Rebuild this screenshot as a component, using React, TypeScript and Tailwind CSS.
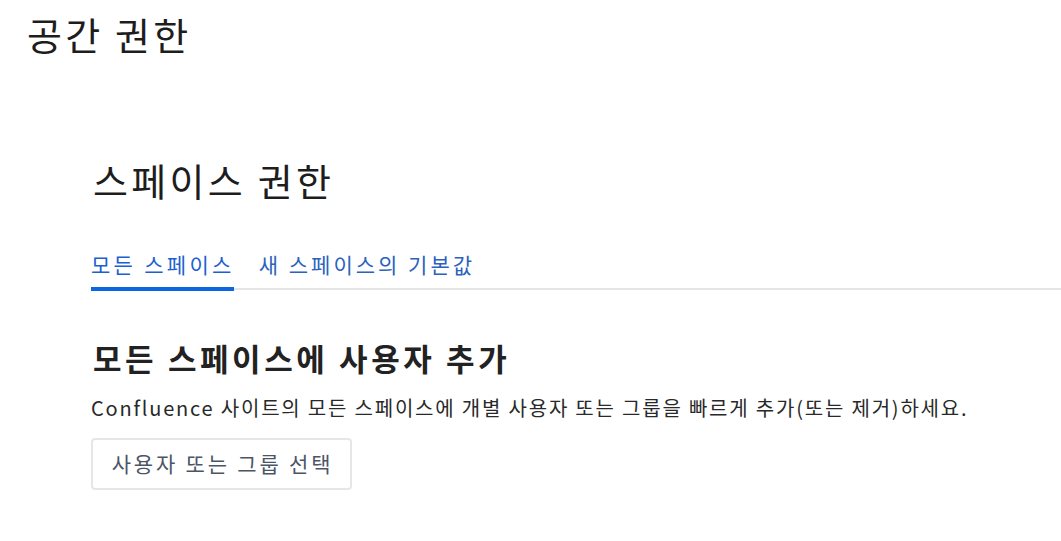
const font = {
    fontFamily: '"Noto Sans CJK KR", "Noto Sans", sans-serif',
};

function Tabs() {
    return (
        <div className="relative flex h-[46px] items-start pt-[6px]">
            <div className="absolute bottom-0 left-0 right-0 h-[2px] bg-[#e4e5e7]" />
            <div className="relative mr-[24px] flex h-full flex-col">
                <span className="text-[21px] leading-[28px] tracking-[3.3px] text-[#1c5fd1]">
                    모든 스페이스
                </span>
                <div className="absolute -bottom-px left-0 right-[1px] h-[4px] bg-[#0c66e4]" />
            </div>
            <span className="text-[21px] leading-[28px] tracking-[3px] text-[#2a62bd]">
                새 스페이스의 기본값
            </span>
        </div>
    );
}

function App() {
    return (
        <div className="min-h-screen bg-white text-[#1d1d1d]" style={font}>
            <h1 className="pl-[27px] pt-[10px] text-[38px] leading-[48px] tracking-[3.2px]">
                공간 권한
            </h1>
            <main className="pl-[91px] pt-[98px]">
                <h2 className="pl-[2px] text-[38px] leading-[48px] tracking-[3.3px]">
                    스페이스 권한
                </h2>
                <div className="mt-[40px]">
                    <Tabs />
                </div>
                <h3 className="mt-[49px] pl-[2px] text-[31px] font-bold leading-[38px] tracking-[3.6px] text-[#222]">
                    모든 스페이스에 사용자 추가
                </h3>
                <p className="mt-[18px] text-[20px] leading-[26px] tracking-[1.8px] text-[#292929]">
                    Confluence 사이트의 모든 스페이스에 개별 사용자 또는 그룹을
                    빠르게 추가(또는 제거)하세요.
                </p>
                <button className="mt-[17px] h-[52px] w-[261px] rounded-[4px] border-2 border-[#e6e6e8] bg-white pl-[2px] text-[21px] tracking-[2.8px] text-[#4c5566]">
                    사용자 또는 그룹 선택
                </button>
            </main>
        </div>
    );
}

export default App;
